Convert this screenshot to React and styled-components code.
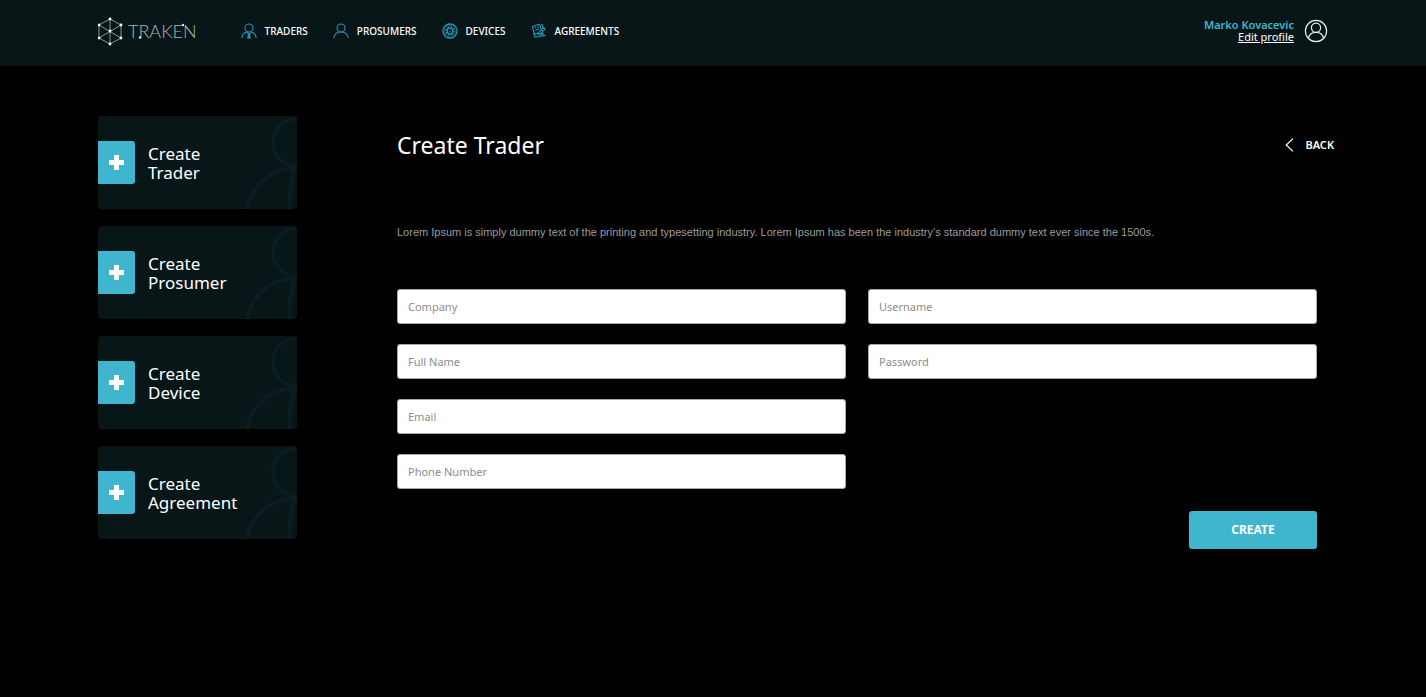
import React from "react";
import styled, { createGlobalStyle } from "styled-components";

const teal = "#3fb6ce";
const panel = "#081618";
const uiFont = `"Noto Sans", "Open Sans", sans-serif`;

const GlobalStyle = createGlobalStyle`
  *, *::before, *::after { box-sizing: border-box; }
  body { margin: 0; background: #000; color: #fff; font-family: ${uiFont}; }
  a { color: inherit; text-decoration: none; }
`;

const Header = styled.header`
  display: flex;
  align-items: center;
  height: 66px;
  padding: 0 98px 4px;
  background: ${panel};
`;

const Logo = styled.a`
  position: relative;
  display: flex;
  align-items: center;
  gap: 5px;
  font: 300 18px/28px Lato, sans-serif;
  color: #aab8b8;
`;

const LogoDots = styled.svg`
  position: absolute;
  top: 0;
  left: 0;
`;

const Nav = styled.nav`
  display: flex;
  gap: 25px;
  margin-left: 44px;
`;

const NavLink = styled.a`
  display: flex;
  align-items: center;
  gap: 8px;
  font-size: 10px;
  font-weight: 500;
  line-height: 16px;

  svg { color: #2c93b4; }
`;

const Profile = styled.div`
  display: flex;
  align-items: center;
  gap: 10px;
  margin-left: auto;
`;

const ProfileText = styled.div`
  display: flex;
  flex-direction: column;
  align-items: flex-end;
  font-size: 11px;
  line-height: 12px;
`;

const UserName = styled.span`
  font-weight: 600;
  color: ${teal};
`;

const EditLink = styled.a`
  font-weight: 400;
  text-decoration: underline;
`;

const Page = styled.div`
  display: flex;
  align-items: flex-start;
  gap: 100px;
  padding: 50px 92px 50px 98px;
`;

const Sidebar = styled.aside`
  display: flex;
  flex-direction: column;
  flex: 0 0 199px;
  gap: 17px;
`;

const Card = styled.a`
  position: relative;
  display: flex;
  align-items: center;
  gap: 13px;
  height: 93px;
  border-radius: 4px;
  overflow: hidden;
  background: ${panel};
  font-size: 17px;
  line-height: 19px;
`;

const CardArt = styled.svg`
  position: absolute;
  right: 0;
  bottom: 0;
  color: #0c1d1f;
`;

const PlusTile = styled.span`
  display: grid;
  place-items: center;
  width: 37px;
  height: 43px;
  border-radius: 0 3px 3px 0;
  background: ${teal};
`;

const CardLabel = styled.span`
  display: block;
`;

const Main = styled.main`
  flex: 1;
  min-width: 0;
`;

const TitleRow = styled.div`
  display: flex;
  align-items: center;
  justify-content: space-between;
  height: 58px;
`;

const Title = styled.h1`
  margin: 0;
  font-size: 23px;
  font-weight: 400;
  line-height: 32px;
`;

const BackLink = styled.a`
  display: flex;
  align-items: center;
  gap: 11px;
  font-size: 11px;
  font-weight: 600;
  line-height: 16px;
`;

const Intro = styled.p`
  margin: 50px 0 49px;
  color: #9c9c9c;
  font: 11px/16px "Liberation Sans", Arial, sans-serif;
`;

const Form = styled.form`
  display: flex;
  flex-direction: column;
  gap: 22px;
  padding-right: 17px;
`;

const Columns = styled.div`
  display: grid;
  grid-template-columns: 1fr 1fr;
  gap: 22px;
`;

const Column = styled.div`
  display: flex;
  flex-direction: column;
  gap: 20px;
`;

const Input = styled.input`
  width: 100%;
  height: 35px;
  padding: 0 10px;
  border: 1px solid #a9a9a9;
  border-radius: 3px;
  background: #fff;
  color: #222;
  font: 11px/16px ${uiFont};

  &::placeholder { color: #8c8c8c; opacity: 1; }
`;

const SubmitButton = styled.button`
  align-self: flex-end;
  width: 128px;
  height: 38px;
  border: 0;
  border-radius: 3px;
  background: ${teal};
  color: #fff;
  font: 700 12px/16px ${uiFont};
  cursor: pointer;
`;

const hexPoints = [[12, 2], [23, 8], [23, 21], [12, 27], [1, 21], [1, 8], [12, 14]];

const LogoMark = () => (
  <svg width="25" height="29" viewBox="0 0 25 29" fill="none" stroke="#a9b5b5" strokeWidth="0.8" aria-hidden="true">
    <path d="M12 2 23 8V21L12 27 1 21V8ZM12 2V27M1 8 23 21M23 8 1 21" />
    {hexPoints.map(([x, y]) => (
      <circle key={`${x}-${y}`} cx={x} cy={y} r="1.4" fill="#fff" stroke="none" />
    ))}
  </svg>
);

const iconProps = {
  width: 16,
  height: 16,
  viewBox: "0 0 16 16",
  fill: "none",
  stroke: "currentColor",
  strokeWidth: 1.1,
  "aria-hidden": true,
};

const ProsumerIcon = () => (
  <svg {...iconProps}>
    <circle cx="8" cy="5" r="4" />
    <path d="M.8 15C1.4 11.2 4 9 8 9S14.6 11.2 15.2 15" />
  </svg>
);

const TraderIcon = () => (
  <svg {...iconProps}>
    <circle cx="8" cy="5" r="4" />
    <path d="M.8 15C1.3 12 3 9.6 5.6 9L8 11 10.4 9C13 9.6 14.7 12 15.2 15" />
    <path d="M7.2 11.2H8.8L9.4 15.2H6.6Z" fill="currentColor" strokeWidth="0.6" />
  </svg>
);

const DeviceIcon = () => (
  <svg {...iconProps}>
    <circle cx="8" cy="8" r="7" strokeWidth="1.3" />
    <circle cx="8" cy="8" r="5.4" strokeWidth="0.5" />
    <circle cx="8" cy="8" r="2.8" strokeWidth="1.2" />
    <circle cx="8" cy="8" r="4" strokeWidth="1.4" strokeDasharray="1.57 1.57" />
    <circle cx="8" cy="8" r="0.7" fill="currentColor" stroke="none" />
  </svg>
);

const AgreementIcon = () => (
  <svg {...iconProps} strokeWidth="1.1">
    <path d="M1.2 3.6 8.6 1.2 10.6 8M1.2 3.6 3.6 11.2 7.4 10" />
    <path d="M2.6 9.8 4 14.2 14.4 12.4M10 1.6 11.8 2.2 11.6 6" />
    <path d="M3.6 5 5.2 4.5M6.4 4.8 8 3.6M4.2 7.2 7.8 6.2" />
    <path d="M7.4 11.4 8 9.2 12.8 4.6 14 6 9.4 10.8ZM9.6 12.6 11.4 10 13 12" />
  </svg>
);

const AvatarIcon = () => (
  <svg width="24" height="24" viewBox="0 0 24 24" fill="none" stroke="#e8eeee" strokeWidth="1.2" aria-hidden="true">
    <circle cx="12" cy="12" r="10.6" />
    <circle cx="12" cy="8.8" r="4.6" />
    <path d="M4.4 19.2C5.2 15.4 8 13.4 12 13.4S18.8 15.4 19.6 19.2" />
  </svg>
);

const PlusIcon = () => (
  <svg width="15" height="15" viewBox="0 0 15 15" fill="#fff" aria-hidden="true">
    <path d="M5 0h5v5h5v5H10v5H5V10H0V5h5z" />
  </svg>
);

const ChevronIcon = () => (
  <svg width="9" height="14" viewBox="0 0 9 14" fill="none" stroke="#fff" strokeWidth="1.2" aria-hidden="true">
    <path d="M8 .6 1.2 7 8 13.4" />
  </svg>
);

const navItems = [
  ["TRADERS", TraderIcon],
  ["PROSUMERS", ProsumerIcon],
  ["DEVICES", DeviceIcon],
  ["AGREEMENTS", AgreementIcon],
];

const cards = ["Trader", "Prosumer", "Device", "Agreement"];

const fieldColumns = [
  [
    ["company", "Company", "text"],
    ["fullName", "Full Name", "text"],
    ["email", "Email", "email"],
    ["phone", "Phone Number", "tel"],
  ],
  [
    ["username", "Username", "text"],
    ["password", "Password", "password"],
  ],
];

export default function App() {
  return (
    <>
      <GlobalStyle />
      <Header>
        <Logo href="#home">
          <LogoMark />
          TRAKEN
          <LogoDots width="100" height="29" viewBox="0 0 100 29" fill="#dfe8e8" aria-hidden="true">
            <circle cx="42" cy="20.5" r="1.2" />
            <circle cx="85" cy="8" r="1.2" />
          </LogoDots>
        </Logo>
        <Nav>
          {navItems.map(([label, Icon]) => (
            <NavLink key={label} href={`#${label.toLowerCase()}`}>
              <Icon />
              {label}
            </NavLink>
          ))}
        </Nav>
        <Profile>
          <ProfileText>
            <UserName>Marko Kovacevic</UserName>
            <EditLink href="#profile">Edit profile</EditLink>
          </ProfileText>
          <AvatarIcon />
        </Profile>
      </Header>
      <Page>
        <Sidebar>
          {cards.map((name) => (
            <Card key={name} href={`#create-${name.toLowerCase()}`}>
              <CardArt width="54" height="93" viewBox="0 0 54 93" fill="none" stroke="currentColor" strokeWidth="4" aria-hidden="true">
                <path d="M54 2C39 4 30 13 30 26S39 49 54 51M4 94C8 70 26 53 54 52M47 94C46 80 48 64 52 52" />
              </CardArt>
              <PlusTile>
                <PlusIcon />
              </PlusTile>
              <CardLabel>
                Create
                <br />
                {name}
              </CardLabel>
            </Card>
          ))}
        </Sidebar>
        <Main>
          <TitleRow>
            <Title>Create Trader</Title>
            <BackLink href="#back">
              <ChevronIcon />
              BACK
            </BackLink>
          </TitleRow>
          <Intro>
            Lorem Ipsum is simply dummy text of the printing and typesetting industry. Lorem Ipsum has been the
            industry’s standard dummy text ever since the 1500s.
          </Intro>
          <Form onSubmit={(event) => event.preventDefault()}>
            <Columns>
              {fieldColumns.map((fields, index) => (
                <Column key={index}>
                  {fields.map(([name, label, type]) => (
                    <Input key={name} name={name} type={type} placeholder={label} aria-label={label} />
                  ))}
                </Column>
              ))}
            </Columns>
            <SubmitButton type="submit">CREATE</SubmitButton>
          </Form>
        </Main>
      </Page>
    </>
  );
}
